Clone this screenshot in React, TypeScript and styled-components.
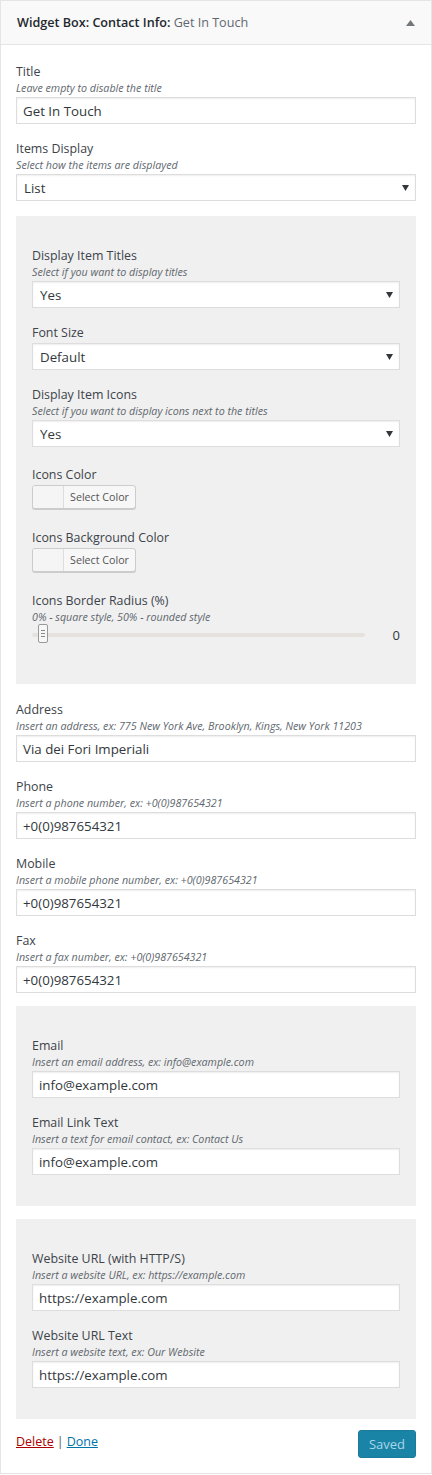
import React from 'react';
import styled, { createGlobalStyle } from 'styled-components';

const GlobalStyle = createGlobalStyle`
  body {
    margin: 0;
    background: #ffffff;
    font-family: "Open Sans", "Noto Sans", sans-serif;
    color: #23282d;
  }
`;

interface FieldProps {
  label: string;
  desc?: string;
  value?: string;
  select?: boolean;
  extra?: number;
}

const Field: React.FC<FieldProps> = ({ label, desc, value, select, extra }) => {
  return (
    <FieldWrap $extra={extra}>
      <Label>{label}</Label>
      {desc && <Desc>{desc}</Desc>}
      {select ? (
        <SelectBox>
          <span>{value}</span>
          <svg width="7" height="6" viewBox="0 0 7 6">
            <path d="M0 0 L7 0 L3.5 6 Z" fill="#32373c" />
          </svg>
        </SelectBox>
      ) : (
        <TextBox>{value}</TextBox>
      )}
    </FieldWrap>
  );
};

const ColorField: React.FC<{ label: string }> = ({ label }) => (
  <FieldWrap $extra={4} $top={4}>
    <Label>{label}</Label>
    <ColorButton>
      <Swatch />
      <ColorText>Select Color</ColorText>
    </ColorButton>
  </FieldWrap>
);

const App: React.FC = () => {
  return (
    <>
      <GlobalStyle />
      <Widget>
        <Header>
          <HeaderTitle>
            <strong>Widget Box: Contact Info:</strong> <span>Get In Touch</span>
          </HeaderTitle>
          <svg width="9" height="6" viewBox="0 0 9 6">
            <path d="M0 6 L9 6 L4.5 0 Z" fill="#72777c" />
          </svg>
        </Header>
        <Body>
          <Field label="Title" desc="Leave empty to disable the title" value="Get In Touch" />
          <Field label="Items Display" desc="Select how the items are displayed" value="List" select extra={-1} />

          <Panel $after={17}>
            <Field label="Display Item Titles" desc="Select if you want to display titles" value="Yes" select />
            <Field label="Font Size" value="Default" select />
            <Field
              label="Display Item Icons"
              desc="Select if you want to display icons next to the titles"
              value="Yes"
              select
              extra={3}
            />
            <ColorField label="Icons Color" />
            <ColorField label="Icons Background Color" />
            <FieldWrap $extra={10}>
              <Label>Icons Border Radius (%)</Label>
              <Desc>0% - square style, 50% - rounded style</Desc>
              <SliderRow>
                <Track>
                  <Handle>
                    <i />
                    <i />
                    <i />
                  </Handle>
                </Track>
                <SliderValue>0</SliderValue>
              </SliderRow>
            </FieldWrap>
          </Panel>

          <Field
            label="Address"
            desc="Insert an address, ex: 775 New York Ave, Brooklyn, Kings, New York 11203"
            value="Via dei Fori Imperiali"
          />
          <Field label="Phone" desc="Insert a phone number, ex: +0(0)987654321" value="+0(0)987654321" />
          <Field label="Mobile" desc="Insert a mobile phone number, ex: +0(0)987654321" value="+0(0)987654321" />
          <Field label="Fax" desc="Insert a fax number, ex: +0(0)987654321" value="+0(0)987654321" extra={-3} />

          <Panel $after={13} $bottom={15}>
            <Field label="Email" desc="Insert an email address, ex: info@example.com" value="info@example.com" />
            <Field
              label="Email Link Text"
              desc="Insert a text for email contact, ex: Contact Us"
              value="info@example.com"
            />
          </Panel>

          <Panel $after={11} $bottom={15}>
            <Field
              label="Website URL (with HTTP/S)"
              desc="Insert a website URL, ex: https://example.com"
              value="https://example.com"
            />
            <Field
              label="Website URL Text"
              desc="Insert a website text, ex: Our Website"
              value="https://example.com"
            />
          </Panel>

          <Footer>
            <Links>
              <DeleteLink href="#">Delete</DeleteLink>
              <Sep>|</Sep>
              <DoneLink href="#">Done</DoneLink>
            </Links>
            <SavedButton>Saved</SavedButton>
          </Footer>
        </Body>
      </Widget>
    </>
  );
};

export default App;

const Widget = styled.div`
  width: 432px;
  box-sizing: border-box;
  border: 1px solid #e5e5e5;
  background: #fff;
`;

const Header = styled.div`
  height: 43px;
  background: #f9f9f9;
  border-bottom: 1px solid #e5e5e5;
  display: flex;
  align-items: center;
  justify-content: space-between;
  padding: 0 16px 0 16px;
`;

const HeaderTitle = styled.div`
  font-size: 12.6px;
  color: #5f6870;
  strong {
    font-weight: 600;
    color: #23282d;
  }
`;

const Body = styled.div`
  padding: 18px 15px 15px;
  display: flex;
  flex-direction: column;
`;

const FieldWrap = styled.div<{ $extra?: number; $top?: number }>`
  display: flex;
  flex-direction: column;
  margin-top: ${(p) => p.$top || 0}px;
  margin-bottom: ${(p) => 16 + (p.$extra || 0)}px;
`;

const Label = styled.div`
  font-size: 12.4px;
  line-height: 18px;
  color: #3c434a;
`;

const Desc = styled.div`
  font-size: 10.7px;
  line-height: 15px;
  font-style: italic;
  color: #60676e;
`;

const TextBox = styled.div`
  height: 27px;
  box-sizing: border-box;
  margin-top: 1px;
  border: 1px solid #ddd;
  box-shadow: inset 0 1px 2px rgba(0, 0, 0, 0.07);
  background: #fff;
  padding: 0 6px;
  display: flex;
  align-items: center;
  font-size: 13.3px;
  color: #32373c;
`;

const SelectBox = styled(TextBox)`
  justify-content: space-between;
  padding: 0 6px 0 7px;
`;

const Panel = styled.div<{ $after: number; $bottom?: number }>`
  background: #f0f0f0;
  padding: 31px 16px ${(p) => p.$bottom ?? 14}px;
  margin: 0 0 ${(p) => p.$after}px;
`;

const ColorButton = styled.div`
  display: flex;
  width: 104px;
  height: 24px;
  margin-top: 1px;
  box-sizing: border-box;
  border: 1px solid #ccc;
  border-radius: 3px;
  box-shadow: 0 1px 0 #ccc;
  background: #f7f7f7;
  overflow: hidden;
`;

const Swatch = styled.span`
  width: 30px;
  border-right: 1px solid #ddd;
  background: #f5f5f5;
`;

const ColorText = styled.span`
  flex: 1;
  font-size: 10.7px;
  line-height: 22px;
  text-align: center;
  color: #555;
`;

const SliderRow = styled.div`
  display: flex;
  align-items: center;
  height: 18px;
  margin-top: 1px;
`;

const Track = styled.div`
  position: relative;
  flex: 0 0 333px;
  height: 4px;
  background: #e5e2de;
  border-radius: 2px;
`;

const Handle = styled.span`
  position: absolute;
  left: 6px;
  top: -9px;
  width: 10px;
  height: 19px;
  box-sizing: border-box;
  background: #f7f7f7;
  border: 1px solid #999;
  border-radius: 2px;
  display: flex;
  flex-direction: column;
  justify-content: center;
  align-items: center;
  gap: 2px;
  i {
    display: block;
    width: 4px;
    height: 1px;
    background: #888;
  }
`;

const SliderValue = styled.span`
  margin-left: auto;
  width: 12px;
  text-align: right;
  font-size: 13px;
  color: #32373c;
`;

const Footer = styled.div`
  display: flex;
  justify-content: space-between;
  align-items: flex-start;
`;

const Links = styled.div`
  font-size: 12.5px;
  padding-top: 3px;
`;

const DeleteLink = styled.a`
  color: #a00;
  text-decoration: underline;
`;

const DoneLink = styled.a`
  color: #0073aa;
  text-decoration: underline;
`;

const Sep = styled.span`
  color: #555;
  margin: 0 3px;
`;

const SavedButton = styled.button`
  height: 28px;
  padding: 0 10px;
  border: 1px solid #1a7a9c;
  border-radius: 3px;
  background: #1a84a6;
  color: #a9d6e8;
  font-family: "Open Sans", "Noto Sans", sans-serif;
  font-size: 13px;
`;
